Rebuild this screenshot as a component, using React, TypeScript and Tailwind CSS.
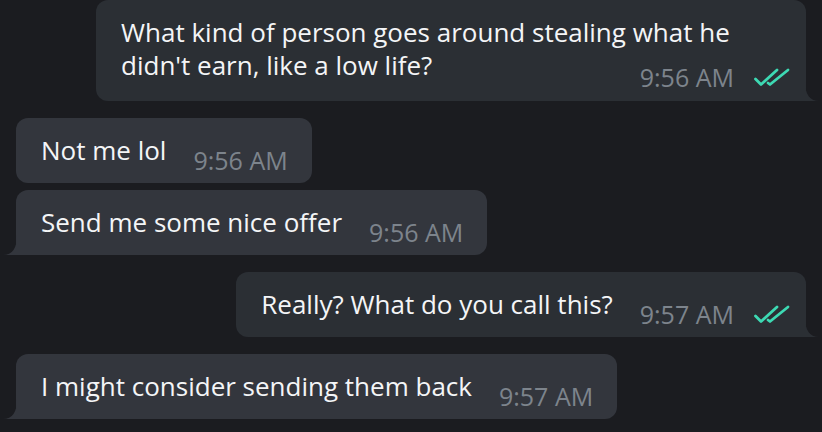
import React from "react";

const Checks = () => (
  <svg width="36" height="19" viewBox="0 0 36 19" fill="none" className="shrink-0">
    <path d="M1.5 11 L7 16.5 L23 2" stroke="#3dd9b3" strokeWidth="2.8" strokeLinecap="round" strokeLinejoin="round" />
    <path d="M14 15 L16 16.5 L34 2" stroke="#3dd9b3" strokeWidth="2.8" strokeLinecap="round" strokeLinejoin="round" />
  </svg>
);

const TailRight = ({ color }: { color: string }) => (
  <svg width="14" height="20" viewBox="0 0 14 20" className="absolute bottom-0 -right-[13px]">
    <path d="M0 0 Q0 20 14 20 L0 20 Z" fill={color} />
  </svg>
);

const TailLeft = ({ color }: { color: string }) => (
  <svg width="14" height="20" viewBox="0 0 14 20" className="absolute bottom-0 -left-[13px]">
    <path d="M14 0 Q14 20 0 20 L14 20 Z" fill={color} />
  </svg>
);

const OUT = "#2b2f34";
const IN = "#33363d";

const Time = ({ t }: { t: string }) => (
  <span className="text-[#7d848c] text-[25px] leading-[33px] whitespace-nowrap">{t}</span>
);

const Incoming = ({ text, time, tail }: { text: string; time: string; tail?: boolean }) => (
  <div className="flex justify-start">
    <div
      className={`relative flex items-start leading-[33px] bg-[#33363d] pl-[25px] pr-[24px] pt-4 pb-[6px] rounded-[12px] ${tail ? "rounded-bl-none" : ""}`}
    >
      <span className="leading-[33px] whitespace-nowrap">{text}</span>
      <span className="ml-[27px] mt-[10px] flex">
        <Time t={time} />
      </span>
      {tail && <TailLeft color={IN} />}
    </div>
  </div>
);

const OutgoingShort = ({ text, time }: { text: string; time: string }) => (
  <div className="flex justify-end">
    <div className="relative flex items-start leading-[33px] bg-[#2b2f34] pl-[25px] pr-[16px] pt-4 pb-[6px] rounded-[12px] rounded-br-none">
      <span className="leading-[33px] whitespace-nowrap">{text}</span>
      <span className="ml-[27px] mt-[10px] flex items-center gap-[20px]">
        <Time t={time} />
        <Checks />
      </span>
      <TailRight color={OUT} />
    </div>
  </div>
);

export default function App() {
  return (
    <div
      className="w-[822px] h-[432px] overflow-hidden bg-[#1b1c20] text-[#f4f5f7] text-[26px] leading-[33px] px-4 flex flex-col"
      style={{ fontFamily: '"Open Sans", "Noto Sans", sans-serif' }}
    >
      <div className="flex justify-end">
        <div className="relative w-[710px] bg-[#2b2f34] pl-[25px] pr-[16px] pt-4 pb-[7px] rounded-[12px] rounded-br-none">
          <p className="leading-[33px] pr-[10px]">
            What kind of person goes around stealing what he didn't earn, like a low life?
          </p>
          <div className="flex justify-end items-center gap-[20px] -mt-[21px]">
            <Time t="9:56 AM" />
            <Checks />
          </div>
          <TailRight color={OUT} />
        </div>
      </div>
      <div className="h-[17px] shrink-0" />
      <Incoming text="Not me lol" time="9:56 AM" />
      <div className="h-[7px] shrink-0" />
      <Incoming text="Send me some nice offer" time="9:56 AM" tail />
      <div className="h-[17px] shrink-0" />
      <OutgoingShort text="Really? What do you call this?" time="9:57 AM" />
      <div className="h-[17px] shrink-0" />
      <Incoming text="I might consider sending them back" time="9:57 AM" tail />
    </div>
  );
}
